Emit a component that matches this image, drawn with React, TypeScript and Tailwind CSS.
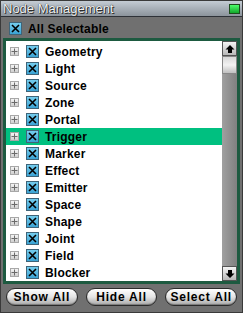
const items = [
  "Geometry",
  "Light",
  "Source",
  "Zone",
  "Portal",
  "Trigger",
  "Marker",
  "Effect",
  "Emitter",
  "Space",
  "Shape",
  "Joint",
  "Field",
  "Blocker",
];

const CheckBox: React.FC = () => (
  <span className="flex h-[13px] w-[13px] items-center justify-center border border-[#3f6478] bg-gradient-to-b from-[#74cdee] to-[#3aa3d4]">
    <svg width="9" height="9" viewBox="0 0 9 9">
      <path d="M1 1 L8 8 M8 1 L1 8" stroke="#000" strokeWidth="1.6" />
    </svg>
  </span>
);

const Expander: React.FC = () => (
  <span className="flex h-[9px] w-[9px] items-center justify-center border border-[#a8a8a8] bg-gradient-to-b from-[#f4f4f4] to-[#d0d0d0]">
    <svg width="7" height="7" viewBox="0 0 7 7">
      <path d="M0.5 3.5 H6.5 M3.5 0.5 V6.5" stroke="#6a6a6a" strokeWidth="1" />
    </svg>
  </span>
);

const PillButton: React.FC<{ label: string }> = ({ label }) => (
  <button className="flex h-[18px] flex-1 items-center justify-center rounded-full border border-[#2a2a2a] bg-gradient-to-b from-[#ffffff] via-[#e4e4e4] to-[#a8a8a8] text-[12px] font-bold tracking-[0.8px] text-black shadow-[inset_0_-1px_1px_rgba(0,0,0,0.3)]">
    {label}
  </button>
);

export default function App() {
  return (
    <div
      className="flex h-[313px] w-[243px] flex-col border border-[#3a3a3a] bg-[#707070]"
      style={{ fontFamily: "Arial, 'Liberation Sans', sans-serif" }}
    >
      <div className="flex h-[16px] items-center justify-between border-b border-[#2e3238] bg-gradient-to-b from-[#c4ccd4] to-[#8c949c] pl-[2px] pr-[2px]">
        <span
          className="text-[13px] leading-none text-[#f4f4f4]"
          style={{ textShadow: "0 0 1px #000, 1px 1px 0 #333" }}
        >
          Node Management
        </span>
        <span className="h-[10px] w-[11px] border border-[#1d4d1d] bg-gradient-to-b from-[#4cff6c] to-[#0fa82a]" />
      </div>
      <div className="flex h-[21px] items-center gap-[6px] pl-[8px] pt-[2px]">
        <CheckBox />
        <span className="text-[12px] font-bold tracking-[0.2px] text-black">All Selectable</span>
      </div>
      <div className="mx-[2px] flex h-[246px] border-[3px] border-[#1d5a40] bg-white">
        <div className="flex flex-1 flex-col pt-[2px]">
          {items.map((name) => (
            <div
              key={name}
              className={`flex h-[17px] shrink-0 items-center pl-[4px] ${
                name === "Trigger" ? "bg-[#00c080]" : ""
              }`}
            >
              <Expander />
              <span className="ml-[7px]">
                <CheckBox />
              </span>
              <span className="ml-[6px] text-[12px] font-bold leading-none tracking-[0.2px] text-black">
                {name}
              </span>
            </div>
          ))}
        </div>
        <div className="flex w-[15px] flex-col bg-gradient-to-r from-[#a0a0a0] to-[#808080]">
          <div className="flex h-[15px] items-center justify-center border border-[#555] bg-gradient-to-b from-[#f4f4f4] to-[#b8b8b8]">
            <svg width="10" height="10" viewBox="0 0 10 10">
              <path d="M5 1 L9.5 5.5 H7 V9 H3 V5.5 H0.5 Z" fill="#000" />
            </svg>
          </div>
          <div className="h-[18px] border border-[#888] bg-gradient-to-b from-[#d8d8d8] via-[#f2f2f2] to-[#c0c0c0]" />
          <div className="flex-1" />
          <div className="flex h-[15px] items-center justify-center border border-[#555] bg-gradient-to-b from-[#f4f4f4] to-[#b8b8b8]">
            <svg width="10" height="10" viewBox="0 0 10 10">
              <path d="M5 9 L9.5 4.5 H7 V1 H3 V4.5 H0.5 Z" fill="#000" />
            </svg>
          </div>
        </div>
      </div>
      <div className="flex gap-[8px] px-[5px] pt-[4px]">
        <PillButton label="Show All" />
        <PillButton label="Hide All" />
        <PillButton label="Select All" />
      </div>
    </div>
  );
}
